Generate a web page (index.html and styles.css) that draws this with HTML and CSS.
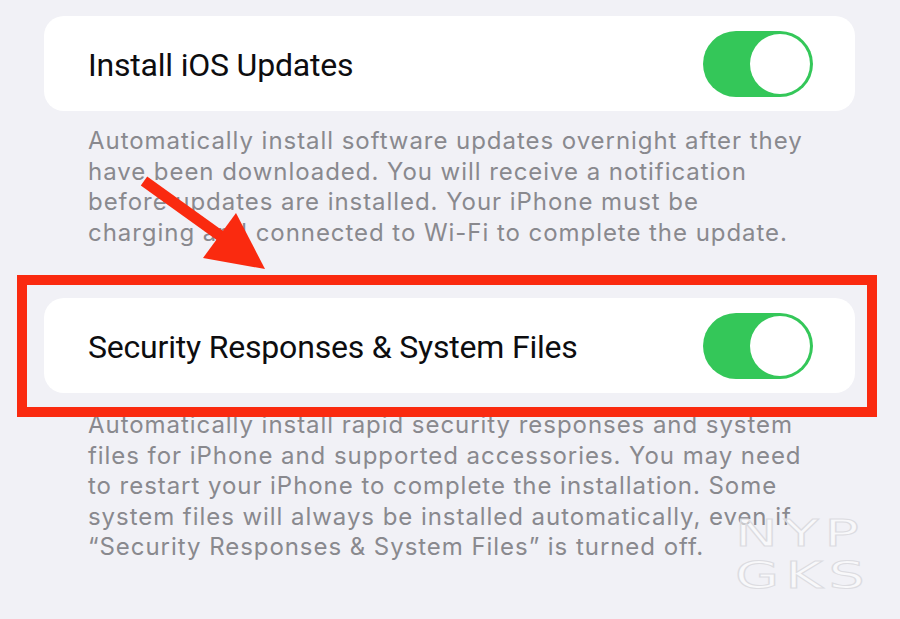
FILE: index.html
```html
<!DOCTYPE html>
<html lang="en">
<head>
<meta charset="utf-8">
<title>Software Update Settings</title>
<link rel="stylesheet" href="styles.css">
</head>
<body>
<main class="page">
  <section class="group">
    <div class="card">
      <span class="label">Install iOS Updates</span>
      <span class="toggle on"><span class="knob"></span></span>
    </div>
    <p class="footer">Automatically install software updates overnight after they<br>have been downloaded. You will receive a notification<br>before updates are installed. Your iPhone must be<br>charging and connected to Wi-Fi to complete the update.</p>
  </section>
  <section class="group group-second">
    <div class="card">
      <span class="label">Security Responses &amp; System Files</span>
      <span class="toggle on"><span class="knob"></span></span>
    </div>
    <p class="footer footer-second">Automatically install rapid security responses and system<br>files for iPhone and supported accessories. You may need<br>to restart your iPhone to complete the installation. Some<br>system files will always be installed automatically, even if<br>“Security Responses &amp; System Files” is turned off.</p>
  </section>

  <div class="highlight"></div>
  <svg class="arrow" width="900" height="619" viewBox="0 0 900 619" aria-hidden="true">
    <line x1="144" y1="181" x2="222" y2="237" stroke="#fa2a0f" stroke-width="11"/>
    <polygon points="236,213 203,258 265,269" fill="#fa2a0f"/>
  </svg>
  <div class="watermark"><span>NYP</span><span>GKS</span></div>
</main>
</body>
</html>
```
FILE: styles.css
```css
html, body {
  margin: 0;
  padding: 0;
}
body {
  background: #f1f1f6;
  font-family: Inter, "Noto Sans", sans-serif;
  width: 900px;
  height: 619px;
  overflow: hidden;
}
.page {
  position: relative;
  width: 900px;
  height: 619px;
  padding: 16px 45px 0 44px;
  box-sizing: border-box;
}
.group-second {
  margin-top: 50px;
}
.card {
  height: 95px;
  background: #ffffff;
  border-radius: 20px;
  display: flex;
  align-items: center;
  justify-content: space-between;
  padding: 0 42px 0 44px;
}
.label {
  font-family: Roboto, "Noto Sans", sans-serif;
  font-size: 32px;
  color: #0d0d0f;
  letter-spacing: -0.2px;
  padding-top: 2px;
}
.toggle {
  width: 110px;
  height: 66px;
  border-radius: 33px;
  background: #34c759;
  display: flex;
  align-items: center;
  justify-content: flex-end;
  padding: 0 3px;
  box-sizing: border-box;
}
.knob {
  width: 60px;
  height: 60px;
  border-radius: 50%;
  background: #ffffff;
}
.footer {
  margin: 0;
  padding: 15px 0 0 44px;
  font-size: 24px;
  line-height: 30.5px;
  color: #89898e;
  letter-spacing: 0.95px;
  white-space: nowrap;
}
.footer-second {
  padding-top: 17px;
}
.highlight {
  position: absolute;
  left: 17px;
  top: 275px;
  width: 860px;
  height: 142px;
  border: 10.5px solid #fa2a0f;
  box-sizing: border-box;
}
.arrow {
  position: absolute;
  left: 0;
  top: 0;
  pointer-events: none;
}
.watermark {
  position: absolute;
  left: 735px;
  top: 512px;
  display: flex;
  flex-direction: column;
  font-family: "DejaVu Sans", sans-serif;
  font-size: 38px;
  line-height: 42px;
  letter-spacing: 4px;
  color: rgba(255, 255, 255, 0.55);
  -webkit-text-stroke: 1px #dcdce1;
  transform: scaleX(1.5);
  transform-origin: left top;
}
```
